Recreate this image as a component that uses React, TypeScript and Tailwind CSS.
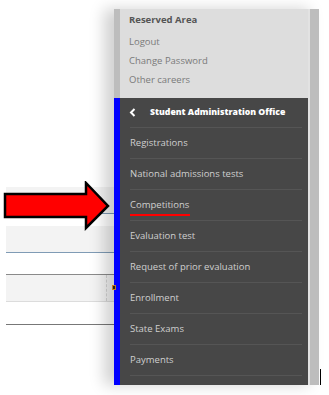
import React from 'react';

const menuItems = [
  'Registrations',
  'National admissions tests',
  'Competitions',
  'Evaluation test',
  'Request of prior evaluation',
  'Enrollment',
  'State Exams',
  'Payments',
];

const Arrow = () => (
  <svg width="108" height="50" viewBox="0 0 108 50" className="absolute left-[3px] top-[181px]">
    <polygon
      points="2,13 83,13 83,2 105,25 83,47 83,36 2,36"
      fill="#ff0000"
      stroke="#000"
      strokeWidth="2.5"
      strokeLinejoin="miter"
    />
  </svg>
);

export default function App() {
  return (
    <div
      className="relative flex w-[329px] h-[395px] bg-white overflow-hidden"
      style={{ fontFamily: '"Open Sans", "Noto Sans", sans-serif' }}
    >
      {/* page behind the side menu */}
      <div className="w-[114px] shrink-0 pt-[187px]">
        <div className="ml-[6px] h-[26px] bg-[#f3f3f3]" />
        <div className="ml-[6px] h-px bg-[#7f9bb5]" />
        <div className="ml-[6px] mt-[12px] h-[26px] bg-[#f3f3f3]" />
        <div className="ml-[6px] h-px bg-[#7f9bb5]" />
        <div className="ml-[6px] mt-[21px] h-px bg-[#8a8a8a]" />
        <div className="ml-[6px] h-[26px] bg-[#f3f3f3] flex justify-end">
          <div className="w-[8px] border-l border-dashed border-[#bbb] relative">
            <div className="absolute left-[5px] top-[10px] w-[4px] h-[5px] border border-[#c87b1e] bg-[#222]" />
          </div>
        </div>
        <div className="ml-[6px] h-px bg-[#dcdcdc]" />
        <div className="ml-[6px] mt-[22px] h-px bg-[#777]" />
      </div>

      {/* side menu */}
      <div className="mt-[9px] h-[376px] flex shadow-[-10px_0_14px_rgba(0,0,0,0.18)]">
        <div className="w-[6px] flex flex-col">
          <div className="h-[89px] bg-[#bdbdbd]" />
          <div className="flex-1 bg-[#0000ff]" />
        </div>
        <div className="w-[188px] flex flex-col">
          <div className="h-[89px] bg-[#dddddd] pl-[9px] pt-[1px] text-[9.5px] leading-[19px]">
            <div className="font-bold text-[#555]">Reserved Area</div>
            <div className="mt-[3px] text-[#7a7a7a]">Logout</div>
            <div className="text-[#7a7a7a]">Change Password</div>
            <div className="text-[#7a7a7a]">Other careers</div>
          </div>
          <div className="flex-1 bg-[#474747] text-[9.5px]">
            <div className="h-[30px] mx-[10px] mr-[6px] flex items-center border-b border-[#555] text-white font-extrabold">
              <svg width="8" height="9" viewBox="0 0 8 9" className="ml-[-1px] mr-[13px]">
                <path d="M5.5 1 L2 4.5 L5.5 8" fill="none" stroke="#fff" strokeWidth="2" />
              </svg>
              <span className="text-[8.7px]">Student Administration Office</span>
            </div>
            {menuItems.map((item) => (
              <div
                key={item}
                className="h-[31px] ml-[10px] mr-[6px] flex items-center border-b border-[#555] text-[#cfcfcf]"
              >
                <span
                  className={
                    item === 'Competitions'
                      ? 'relative after:absolute after:left-0 after:-bottom-[4px] after:w-[60px] after:h-[2px] after:bg-[#ff0000]'
                      : ''
                  }
                >
                  {item}
                </span>
              </div>
            ))}
          </div>
        </div>
        <div className="w-[2px] bg-[#e2e2e2]" />
        <div className="w-[9px] bg-[#bdbdbd]" />
      </div>

      <div className="absolute left-[320px] top-[369px] w-px h-[16px] bg-black" />
      <Arrow />
    </div>
  );
}
